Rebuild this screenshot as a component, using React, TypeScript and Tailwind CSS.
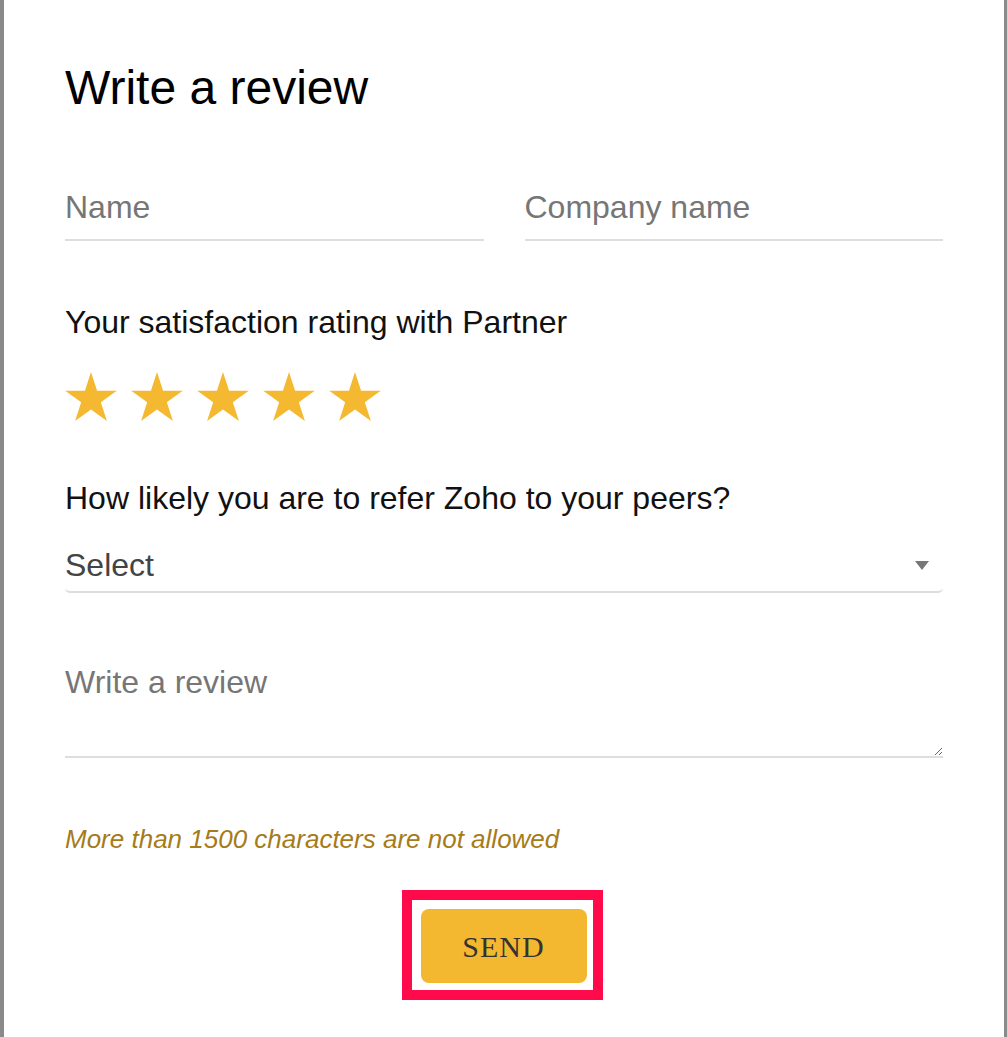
import React, { useState } from 'react';

// Review form: name/company, star rating, referral select, review text, send

const STAR_POINTS =
  '26,0 32.09,18.73 51.77,18.73 35.84,30.3 41.93,49.02 26,37.45 10.07,49.02 16.16,30.3 0.23,18.73 19.91,18.73';

function Star({ filled }: { filled: boolean }) {
  return (
    <svg width="52" height="50" viewBox="0 0 52 50" className="block">
      <polygon points={STAR_POINTS} fill={filled ? '#f4b930' : '#e2e2e2'} />
    </svg>
  );
}

export default function App() {
  const [rating, setRating] = useState(5);

  return (
    <div className="min-h-screen bg-white border-l-4 border-r-[3px] border-[#8a8a8a] px-[61px] pt-[64px] font-['Liberation_Sans',Arial,sans-serif]">
      <h1 className="text-[48px] leading-none text-black font-normal">Write a review</h1>

      <div className="grid grid-cols-2 gap-[41px] mt-[79px]">
        <input
          type="text"
          placeholder="Name"
          className="block w-full h-[50px] pb-[16px] text-[32px] text-[#333] placeholder:text-[#767676] border-b-2 border-[#dedede] outline-none bg-transparent"
        />
        <input
          type="text"
          placeholder="Company name"
          className="block w-full h-[50px] pb-[16px] text-[32px] text-[#333] placeholder:text-[#767676] border-b-2 border-[#dedede] outline-none bg-transparent"
        />
      </div>

      <p className="mt-[65px] text-[32px] leading-none text-[#111]">
        Your satisfaction rating with Partner
      </p>

      <div className="flex gap-[14px] mt-[34px]">
        {[1, 2, 3, 4, 5].map((n) => (
          <button key={n} type="button" onClick={() => setRating(n)} className="block">
            <Star filled={n <= rating} />
          </button>
        ))}
      </div>

      <p className="mt-[60px] text-[32px] leading-none text-[#111]">
        How likely you are to refer Zoho to your peers?
      </p>

      <div className="mt-[35px] flex items-start justify-between pb-[10px] border-b-2 border-[#dcdcdc] rounded-b-[5px] cursor-pointer">
        <span className="text-[32px] leading-none text-[#444]">Select</span>
        <svg width="14" height="9" viewBox="0 0 14 9" className="mt-[12px] mr-[14px]">
          <polygon points="0,0 14,0 7,9" fill="#777" />
        </svg>
      </div>

      <textarea
        placeholder="Write a review"
        className="block w-full mt-[73px] h-[92px] text-[32px] leading-none text-[#333] placeholder:text-[#767676] border-b-2 border-[#dedede] outline-none bg-transparent resize-y"
      />

      <p className="mt-[68px] text-[26px] leading-none italic text-[#a67b19]">
        More than 1500 characters are not allowed
      </p>

      <div className="flex justify-center mt-[38px] pr-[4px]">
        <div className="border-[10px] border-[#ff0a4a] pl-[9px] pr-[6px] pt-[9px] pb-[7px]">
          <button
            type="button"
            className="w-[166px] h-[74px] rounded-[8px] bg-[#f3b82f] text-[30px] tracking-[1px] text-[#333] font-['Liberation_Serif','Times_New_Roman',serif]"
          >
            SEND
          </button>
        </div>
      </div>
    </div>
  );
}
